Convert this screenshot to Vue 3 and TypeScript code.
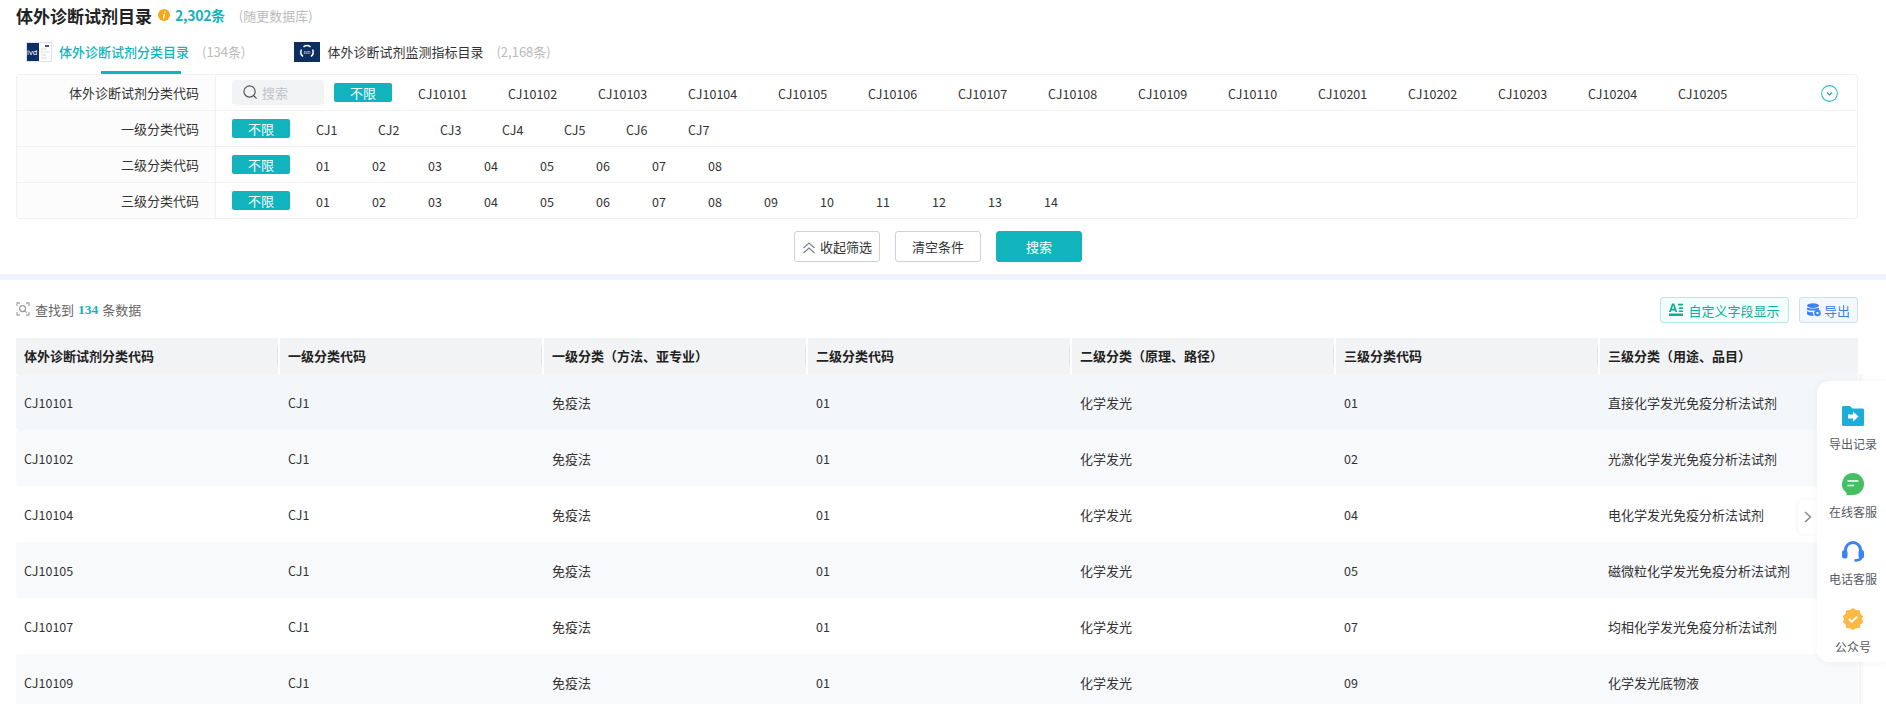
<script setup lang="ts">
const level1 = ['CJ1', 'CJ2', 'CJ3', 'CJ4', 'CJ5', 'CJ6', 'CJ7']
const level2 = ['01', '02', '03', '04', '05', '06', '07', '08']
const level3 = ['01', '02', '03', '04', '05', '06', '07', '08', '09', '10', '11', '12', '13', '14']
const codes = ['CJ10101', 'CJ10102', 'CJ10103', 'CJ10104', 'CJ10105', 'CJ10106', 'CJ10107', 'CJ10108', 'CJ10109', 'CJ10110', 'CJ10201', 'CJ10202', 'CJ10203', 'CJ10204', 'CJ10205']
const columns = ['体外诊断试剂分类代码', '一级分类代码', '一级分类（方法、亚专业）', '二级分类代码', '二级分类（原理、路径）', '三级分类代码', '三级分类（用途、品目）']
const rows = [
  ['CJ10101', '01', '直接化学发光免疫分析法试剂'],
  ['CJ10102', '02', '光激化学发光免疫分析法试剂'],
  ['CJ10104', '04', '电化学发光免疫分析法试剂'],
  ['CJ10105', '05', '磁微粒化学发光免疫分析法试剂'],
  ['CJ10107', '07', '均相化学发光免疫分析法试剂'],
  ['CJ10109', '09', '化学发光底物液'],
]
</script>

<template>
  <div class="page">
    <section class="top">
      <header class="title-row">
        <h1>体外诊断试剂目录</h1>
        <svg class="info" viewBox="0 0 12 12"><circle cx="6" cy="6" r="6" fill="#f5a81c" /><path d="M6.800 2.400v1.300M6.400 5 5.500 9.600" stroke="#fff" stroke-width="1.400" /></svg>
        <strong>2,302条</strong>
        <span class="note">(随更数据库)</span>
      </header>

      <nav class="tabs">
        <div class="tab active">
          <svg class="tab-icon" viewBox="0 0 26 20">
            <rect x=".5" y=".5" width="25" height="19" fill="#fff" stroke="#dfe2ea" />
            <rect x="1" y="1" width="12" height="18" fill="#0d2f66" />
            <text x="1" y="13" font-size="7.500" fill="#fff" font-family="Noto Sans">ivd</text>
            <path d="M19 4h4" stroke="#0d2f66" stroke-width="1.600" />
            <path d="M15 7h6M15 10h8M15 13h5M15 16h6" stroke="#d4d8e0" />
          </svg>
          <span class="tab-name">体外诊断试剂分类目录</span>
          <span class="count">(134条)</span>
        </div>
        <div class="tab">
          <svg class="tab-icon" viewBox="0 0 26 20">
            <rect width="26" height="20" fill="#0d2f5f" />
            <path d="M9.500 4.800a6 6 0 0 1 7 0M18.600 7.500a6 6 0 0 1-1.600 7M9 14.500a6 6 0 0 1-1.600-7" fill="none" stroke="#fff" stroke-width="1.500" />
            <text x="13" y="11.500" font-size="4" fill="#fff" text-anchor="middle" font-family="Noto Sans">IVD</text>
          </svg>
          <span class="tab-name">体外诊断试剂监测指标目录</span>
          <span class="count">(2,168条)</span>
        </div>
      </nav>

      <div class="filters">
        <div class="filter-row">
          <div class="label">体外诊断试剂分类代码</div>
          <div class="options w90">
            <div class="search-box">
              <svg viewBox="0 0 16 16"><circle cx="7" cy="7" r="6" fill="none" stroke="#555" stroke-width="1.300" /><path d="m11.500 11.500 3 3" stroke="#555" stroke-width="1.300" /></svg>
              <span>搜索</span>
            </div>
            <span class="any">不限</span>
            <span v-for="c in codes" :key="c" class="opt">{{ c }}</span>
            <svg class="more" viewBox="0 0 16 16"><circle cx="8" cy="8" r="7.400" fill="none" stroke="#2bbcc6" /><path d="m5.600 7 2.400 2.400L10.400 7" fill="none" stroke="#1c9aa5" /></svg>
          </div>
        </div>
        <div class="filter-row">
          <div class="label">一级分类代码</div>
          <div class="options w62">
            <span class="any">不限</span>
            <span v-for="c in level1" :key="c" class="opt">{{ c }}</span>
          </div>
        </div>
        <div class="filter-row">
          <div class="label">二级分类代码</div>
          <div class="options w56">
            <span class="any">不限</span>
            <span v-for="c in level2" :key="c" class="opt">{{ c }}</span>
          </div>
        </div>
        <div class="filter-row">
          <div class="label">三级分类代码</div>
          <div class="options w56">
            <span class="any">不限</span>
            <span v-for="c in level3" :key="c" class="opt">{{ c }}</span>
          </div>
        </div>
      </div>

      <div class="actions">
        <button class="btn collapse">
          <svg viewBox="0 0 14 12"><path d="m1.500 6 5.500-5 5.500 5M1.500 11 7 6l5.500 5" fill="none" stroke="#7b828e" stroke-width="1.200" /></svg>
          收起筛选
        </button>
        <button class="btn">清空条件</button>
        <button class="btn primary">搜索</button>
      </div>
    </section>

    <section class="results">
      <div class="toolbar">
        <div class="found">
          <svg viewBox="0 0 14 14">
            <path d="M1 4V1h3M10 1h3v3M13 10v3h-3M4 13H1v-3" fill="none" stroke="#aaa" stroke-width="1.300" />
            <circle cx="6.600" cy="6.600" r="3" fill="none" stroke="#999" stroke-width="1.200" />
            <path d="m9 9 1.600 1.600" stroke="#999" stroke-width="1.200" />
          </svg>
          查找到<b>134</b>条数据
        </div>
        <div class="tools">
          <button class="tool custom">
            <svg viewBox="0 0 14 14" fill="#10ad9a"><path d="M0 9 3 .5h2.200l3 8.500H6.200L5.700 7.400H2.500L2 9zm3-3.200h2.200L4.100 2.400zM9 .8h5v1.700H9zM9.800 4.300H14V6H9.800zM9.800 7.400H14V9H9.800zM0 10.600h14v2.400H0z" /></svg>
            自定义字段显示
          </button>
          <button class="tool export">
            <svg viewBox="0 0 14 14" fill="#3d82f3"><ellipse cx="6" cy="2.600" rx="6" ry="2.400" /><path d="M0 4.400c1.500 1.500 10.500 1.500 12 0v2C10.500 8 1.500 8 0 6.400zM0 8c1.200 1 4 1.300 6 1.200 0 1.500.2 2.500 1 3.500-3 .4-7-.3-7-2z" /><circle cx="10.500" cy="10" r="3.300" /><circle cx="10.500" cy="10" r="1.200" fill="#f3f8ff" /></svg>
            导出
          </button>
        </div>
      </div>

      <div class="table">
        <div class="thead">
          <div v-for="c in columns" :key="c" class="th">{{ c }}</div>
        </div>
        <div v-for="(r, i) in rows" :key="r[0]" class="tr" :class="{ hover: i === 0, stripe: i % 2 === 1 }">
          <div class="td num">{{ r[0] }}</div>
          <div class="td num">CJ1</div>
          <div class="td">免疫法</div>
          <div class="td num">01</div>
          <div class="td">化学发光</div>
          <div class="td num">{{ r[1] }}</div>
          <div class="td">{{ r[2] }}</div>
        </div>
      </div>
    </section>

    <div class="edge-shadow"></div>
    <div class="handle">
      <svg viewBox="0 0 8 12"><path d="m1 1 5.500 5L1 11" fill="none" stroke="#808080" stroke-width="1.300" /></svg>
    </div>
    <aside class="side">
      <div class="side-item">
        <svg viewBox="0 0 22 20"><path d="M0 1.500C0 .7.700 0 1.500 0H8l2.500 2.500h10c.8 0 1.500.7 1.500 1.500v14.500c0 .8-.7 1.500-1.500 1.500h-19C.7 20 0 19.300 0 18.500z" fill="#1cadd9" /><path d="M6 8.500h5V5.500l5.500 5-5.500 5v-3H6z" fill="#fff" /></svg>
        <span>导出记录</span>
      </div>
      <div class="side-item">
        <svg viewBox="0 0 22 22"><path d="M11 0a11 11 0 0 1 0 22H6.500l-2.200-.2.300-1.900A11 11 0 0 1 11 0z" fill="#46bf63" /><path d="M5.500 8h11M5.500 12.500h6.500" stroke="#fff" stroke-width="1.500" /></svg>
        <span>在线客服</span>
      </div>
      <div class="side-item">
        <svg viewBox="0 0 22 22"><path d="M3.500 12.500V10a7.500 7.500 0 0 1 15 0v2.500" fill="none" stroke="#3a82f5" stroke-width="3" /><rect x="0" y="10" width="5.500" height="8.500" rx="2.500" fill="#3a82f5" /><rect x="16.500" y="10" width="5.500" height="8.500" rx="2.500" fill="#3a82f5" /><path d="M19.500 17c-.5 3-3 3.500-7 3.500" fill="none" stroke="#3a82f5" stroke-width="2.500" /></svg>
        <span>电话客服</span>
      </div>
      <div class="side-item">
        <svg viewBox="0 0 24 24"><path d="m12 0 3.400 2.200 4 .2.700 3.900 3 2.700-1.400 3 1.400 3.500-3 2.600-.7 3.700-4 .3L12 24l-3.400-1.900-4-.3-.7-3.700-3-2.600L2.300 12 .9 9 3.900 6.300l.7-3.900 4-.2z" fill="#fdb944" /><path d="m7.500 12 3.200 3 5.800-5.500" fill="none" stroke="#fff" stroke-width="2" /></svg>
        <span>公众号</span>
      </div>
    </aside>
  </div>
</template>

<style scoped>
.page {
  position: relative;
  height: 704px;
  overflow: hidden;
  background: #fff;
  color: #333;
  font-family: "Noto Sans CJK SC", "Noto Sans", sans-serif;
  font-size: 13px;
}
.top {
  padding: 0 28px 12px 16px;
  border-bottom: 6px solid #f0f4f8;
}
.title-row {
  height: 30px;
  margin-bottom: 2px;
  display: flex;
  align-items: center;
}
.title-row h1 {
  margin: 0;
  font-size: 17px;
  font-weight: 700;
  color: #222;
}
.info {
  width: 12px;
  height: 12px;
  margin: 0 5px 0 6px;
}
.title-row strong {
  color: #11b4bd;
  font-size: 14px;
  font-weight: 700;
  letter-spacing: -0.3px;
}
.note {
  margin-left: 14px;
  color: #bbb;
}
.tabs {
  height: 42px;
  display: flex;
  padding-left: 10px;
}
.tab {
  position: relative;
  display: flex;
  align-items: center;
  height: 40px;
  margin-right: 49px;
}
.tab.active::after {
  content: "";
  position: absolute;
  left: 75px;
  bottom: -2px;
  width: 80px;
  height: 3px;
  background: #11b4bd;
}
.tab-icon {
  width: 26px;
  height: 20px;
  margin-right: 7px;
}
.tab-name,
.count {
  padding-bottom: 2px;
}
.tab.active .tab-name {
  color: #11b4bd;
  font-weight: 500;
}
.count {
  color: #bbb;
  margin-left: 13px;
}
.filters {
  border: 1px solid #eff1f4;
  border-radius: 3px;
  height: 145px;
  box-sizing: border-box;
}
.filter-row {
  display: flex;
  height: 36px;
  box-sizing: border-box;
  border-bottom: 1px solid #eff1f4;
}
.filter-row:last-child {
  height: 35px;
  border-bottom: 0;
}
.label {
  flex: none;
  width: 199px;
  box-sizing: border-box;
  padding-right: 16px;
  background: #fcfcfc;
  border-right: 1px solid #eff1f4;
  line-height: 36px;
  text-align: right;
}
.options {
  flex: 1;
  display: flex;
  align-items: center;
  padding-left: 16px;
  position: relative;
}
.search-box {
  width: 92px;
  height: 25px;
  margin-right: 10px;
  padding-left: 11px;
  box-sizing: border-box;
  background: #f2f3f5;
  border-radius: 3px;
  display: flex;
  align-items: center;
  color: #c0c4cc;
}
.search-box svg {
  width: 15px;
  height: 15px;
  margin-right: 4px;
}
.any {
  width: 58px;
  height: 19px;
  margin-right: 26px;
  background: #11b4bd;
  border-radius: 2px;
  color: #fff;
  line-height: 19px;
  text-align: center;
  flex: none;
}
.opt {
  flex: none;
  font-size: 12.5px;
  padding-top: 1px;
}
.w90 .opt { width: 90px; }
.w62 .opt { width: 62px; }
.w56 .opt { width: 56px; }
.more {
  position: absolute;
  right: 19px;
  top: 10px;
  width: 17px;
  height: 17px;
}
.actions {
  margin-top: 12px;
  display: flex;
  justify-content: center;
  gap: 15px;
  height: 31px;
  padding-left: 2px;
}
.btn {
  width: 86px;
  height: 31px;
  border: 1px solid #ccd1da;
  border-radius: 3px;
  background: #fff;
  color: #333;
  font: inherit;
  padding: 0;
  display: flex;
  align-items: center;
  justify-content: center;
}
.btn svg {
  width: 14px;
  height: 12px;
  margin: 2px 4px 0 0;
}
.btn.primary {
  background: #11b4bd;
  border-color: #11b4bd;
  color: #fff;
}
.results {
  padding: 17px 28px 0 16px;
}
.toolbar {
  height: 26px;
  display: flex;
  align-items: center;
  justify-content: space-between;
}
.found {
  display: flex;
  align-items: center;
  color: #666;
  padding-bottom: 2px;
}
.found svg {
  width: 14px;
  height: 14px;
  margin-right: 5px;
}
.found b {
  margin: 2px 4px 0;
  color: #11b4bd;
  font-family: "Liberation Serif", serif;
  font-size: 13.5px;
}
.tools {
  display: flex;
  gap: 10px;
}
.tool {
  height: 26px;
  box-sizing: border-box;
  border-radius: 3px;
  border: 1px solid;
  font: inherit;
  padding: 0;
  display: flex;
  align-items: center;
  justify-content: center;
}
.tool svg {
  width: 14px;
  height: 14px;
  margin-right: 5px;
}
.export svg {
  margin-right: 3px;
}
.custom {
  width: 129px;
  color: #10ad9a;
  background: #f4fdfb;
  border-color: #b3e9e1;
}
.export {
  width: 59px;
  color: #3d82f3;
  background: #f3f8ff;
  border-color: #cbdff8;
}
.table {
  margin-top: 15px;
}
.thead,
.tr {
  display: grid;
  grid-template-columns: repeat(6, 264px) 258px;
}
.thead {
  height: 36px;
}
.th {
  position: relative;
  margin-right: 2px;
  padding-left: 8px;
  background: #f2f3f5;
  color: #222;
  font-weight: 700;
  line-height: 36px;
}
.th:last-child {
  margin-right: 0;
}
.th:not(:last-child)::after {
  content: "";
  position: absolute;
  right: 0;
  top: 9px;
  height: 18px;
  width: 1px;
  background: #e2e5e9;
}
.tr {
  height: 56px;
  border-radius: 4px;
}
.tr.stripe {
  background: #f8f9fb;
}
.tr.hover {
  background: #f4f7fa;
}
.td {
  padding-left: 8px;
  line-height: 58px;
}
.td.num {
  font-size: 12.5px;
}
.edge-shadow {
  position: absolute;
  left: 1859px;
  top: 374px;
  bottom: 0;
  width: 6px;
  background: linear-gradient(90deg, #f4f4f4, #fff);
}
.side {
  position: absolute;
  top: 381px;
  right: 0;
  width: 69px;
  height: 281px;
  box-sizing: border-box;
  padding: 24px 0 0 3px;
  background: #fff;
  border-radius: 12px 0 0 12px;
  box-shadow: 0 0 8px rgba(0, 0, 0, 0.05);
  display: flex;
  flex-direction: column;
}
.side-item {
  height: 67.6px;
  flex: none;
  display: flex;
  flex-direction: column;
  align-items: center;
  color: #555b66;
  font-size: 12px;
}
.side-item svg {
  width: 22px;
  height: 22px;
  margin-bottom: 8px;
}
.handle {
  position: absolute;
  left: 1798px;
  top: 500px;
  width: 19px;
  height: 34px;
  background: #fff;
  border-radius: 6px 0 0 6px;
  box-shadow: -1px 0 4px rgba(0, 0, 0, 0.05);
  display: flex;
  align-items: center;
  justify-content: center;
}
.handle svg {
  width: 8px;
  height: 12px;
}
</style>
